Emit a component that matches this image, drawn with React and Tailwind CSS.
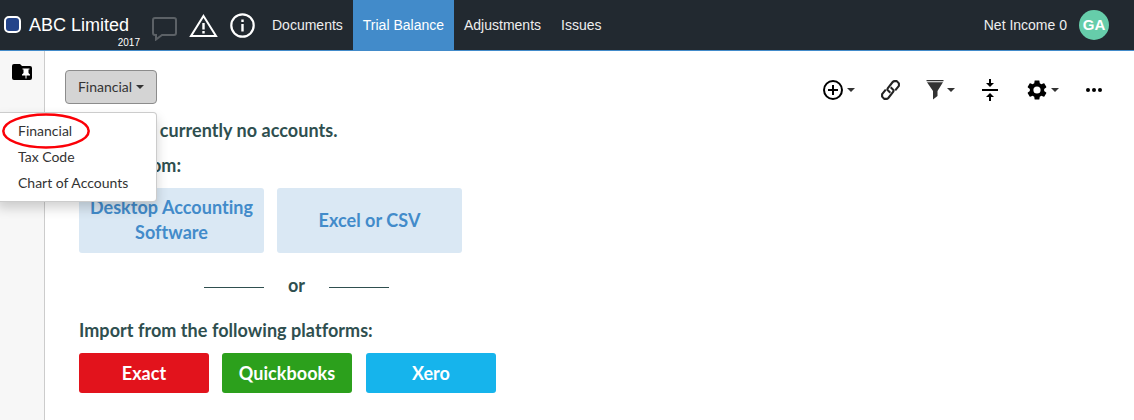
const Caret = ({ className = "" }) => (
  <span className={`block h-0 w-0 border-x-4 border-t-4 border-x-transparent border-t-[#333] ${className}`} />
);

const TopBar = () => (
  <header className="flex h-[51px] border-b border-[#428bca] bg-[#222930] font-['Liberation_Sans',sans-serif] text-sm text-[#eee]">
    <div className="flex w-[262px] pl-1">
      <span className="mt-4 h-[17px] w-[17px] rounded-[5px] border-2 border-white bg-[#24448a]" />
      <div className="ml-2 w-[111px] pt-[12px]">
        <div className="h-[26px] whitespace-nowrap text-[18px] leading-[26px] text-white">ABC Limited</div>
        <div className="text-right text-[10px] leading-[10px] text-white">2017</div>
      </div>
      <svg className="ml-3 mt-[17px] h-6 w-[25px]" viewBox="0 0 25 24" fill="none" stroke="#5c6166" strokeWidth="2">
        <path d="M3 1h19q2 0 2 2v13q0 2-2 2H10L4 22.500V18H3q-2 0-2-2V3q0-2 2-2Z" />
      </svg>
      <svg className="ml-3 mt-[13px] h-6 w-[29px]" viewBox="0 0 29 24" fill="none" stroke="#fff" strokeWidth="2">
        <path d="M14.500 3 27 23H2Z" />
        <path d="M14.500 10v6.500M14.500 18v2.500" strokeWidth="2.400" />
      </svg>
      <svg className="ml-3 mt-[13px] h-[25px] w-[25px]" viewBox="0 0 25 25" fill="none" stroke="#fff" strokeWidth="2.200">
        <circle cx="12.500" cy="12.500" r="11.200" />
        <path d="M12.500 6.500V9M12.500 11v7.500" strokeWidth="2.400" />
      </svg>
    </div>
    <nav className="flex h-[50px] leading-[50px]">
      <a className="px-[10px]">Documents</a>
      <a className="bg-[#428bca] px-[10px] text-white">Trial Balance</a>
      <a className="px-[10px]">Adjustments</a>
      <a className="px-[10px]">Issues</a>
    </nav>
    <div className="ml-auto flex h-[50px] items-center pr-[25px]">
      <span>Net Income 0</span>
      <span className="ml-3 flex h-[30px] w-[30px] items-center justify-center rounded-full bg-[#66cdaa] text-[15px] font-bold text-white">GA</span>
    </div>
  </header>
);

const Toolbar = () => (
  <div className="flex h-10 w-[281px] items-center">
    <svg className="h-5 w-5" viewBox="0 0 20 20" fill="none" stroke="#000" strokeWidth="2">
      <circle cx="10" cy="10" r="9" />
      <path d="M10 5v10M5 10h10" />
    </svg>
    <Caret className="ml-1" />
    <svg className="ml-[26px] h-5 w-[19px]" viewBox="0 0 19 20" fill="none" stroke="#222" strokeWidth="2.100" strokeLinejoin="round">
      <path d="M9.300 12.700 6.800 10.300Q5.900 9.300 6.700 8.300L11.700 2Q12.500 1.100 13.600 1.100H15.800L17.900 3.400V5.800L14.200 10.400" />
      <path d="M9.700 7.300 12.200 9.700Q13.100 10.700 12.300 11.700L7.300 18Q6.500 18.900 5.400 18.900H3.200L1.100 16.600V14.200L4.800 9.600" />
    </svg>
    <svg className="ml-[26px] h-5 w-[18px]" viewBox="0 0 18 20" fill="#333">
      <path d="M.5 0h17v1.200H.5ZM1 2.200h16L11.500 11v5L7 19.500V11Z" />
    </svg>
    <Caret className="ml-[3px]" />
    <svg className="ml-[27px] h-[22px] w-4" viewBox="0 0 16 22" fill="#000">
      <path d="M0 10h16v2H0ZM7 0h2v4h3L8 8 4 4h3ZM7 22h2v-4h3l-4-4-4 4h3Z" />
    </svg>
    <svg className="ml-[29px] h-5 w-5" viewBox="2.200 2 19.600 20" fill="#000">
      <path d="M19.140 12.940c.04-.3.060-.61.060-.94s-.02-.64-.07-.94l2.030-1.580c.18-.14.230-.41.120-.61l-1.920-3.320c-.12-.22-.37-.29-.59-.22l-2.390.96c-.5-.38-1.030-.7-1.620-.94L14.400 2.810c-.04-.24-.24-.41-.48-.41h-3.840c-.24 0-.43.170-.47.410L9.250 5.350c-.59.240-1.130.57-1.620.94l-2.390-.96c-.22-.08-.47 0-.59.220L2.740 8.870c-.12.210-.08.470.120.610l2.030 1.580c-.05.300-.09.630-.09.940s.02.640.070.940l-2.030 1.580c-.18.140-.23.410-.12.610l1.920 3.320c.12.220.37.290.59.220l2.390-.96c.5.380 1.030.70 1.620.94l.36 2.540c.05.240.24.410.48.410h3.840c.24 0 .44-.17.47-.41l.36-2.540c.59-.24 1.130-.56 1.620-.94l2.390.96c.22.080.47 0 .59-.22l1.920-3.320c.12-.22.070-.47-.12-.61ZM12 15.600a3.600 3.600 0 1 1 0-7.200 3.600 3.600 0 0 1 0 7.200Z" />
    </svg>
    <Caret className="ml-1" />
    <svg className="ml-[27px] h-1 w-4" viewBox="0 0 16 4" fill="#000">
      <circle cx="2" cy="2" r="2" /><circle cx="8" cy="2" r="2" /><circle cx="14" cy="2" r="2" />
    </svg>
  </div>
);

const ViewMenu = () => (
  <ul className="absolute -left-[68px] top-[42px] z-10 h-[90px] w-[160px] rounded border border-black/20 bg-white py-[5px] pl-5 text-sm leading-[26px] text-[#333] shadow-[0_6px_12px_rgba(0,0,0,0.18)]">
    <li>Financial</li>
    <li>Tax Code</li>
    <li>Chart of Accounts</li>
    <svg className="absolute left-1 top-0 h-9 w-[90px]" viewBox="0 0 90 36" fill="none" stroke="#fb0007" strokeWidth="2.500">
      <ellipse cx="44" cy="18" rx="42.700" ry="16.500" />
    </svg>
  </ul>
);

export default function App() {
  return (
    <div className="flex h-[420px] w-[1134px] flex-col overflow-hidden bg-white font-[Lato,sans-serif]">
      <TopBar />
      <div className="flex flex-1">
        <aside className="w-[45px] border-r border-[#ccc] bg-[#f7f7f7] pl-3 pt-[13px]">
          <svg className="h-4 w-5" viewBox="0 0 20 16">
            <path d="M2 0h6l2 2h8q2 0 2 2v10q0 2-2 2H2q-2 0-2-2V2Q0 0 2 0Z" fill="#000" />
            <path d="M10.500 4.500h7v1h-1v3.500l1.500 1.500v1h-3.500v3h-1v-3H10v-1l1.500-1.500V5.500h-1Z" fill="#fff" />
          </svg>
        </aside>
        <main className="flex-1">
          <div className="flex h-[69px] justify-between pl-5 pt-[19px]">
            <div className="relative h-[34px]">
              <button className="flex h-[34px] w-[92px] items-center justify-center gap-1 rounded border border-[#8c8c8c] bg-[#d4d4d4] text-sm text-[#333]">
                Financial <Caret />
              </button>
              <ViewMenu />
            </div>
            <div className="pr-[30px]"><Toolbar /></div>
          </div>
          <section className="pl-[34px] text-[18px] font-bold leading-[25px] tracking-[0.045px] text-[#2f4f4f] [font-variant-ligatures:none]">
            <p className="-mt-[2px] whitespace-nowrap">There are currently no accounts.</p>
            <p className="mt-[10px]">Import from:</p>
            <div className="mt-[10px] flex gap-[13px] text-center text-[#428bca]">
              <button className="h-[65px] w-[185px] rounded-[3px] bg-[#dae8f4] pb-[2px]">Desktop Accounting Software</button>
              <button className="h-[65px] w-[185px] rounded-[3px] bg-[#dae8f4]">Excel or CSV</button>
            </div>
            <div className="ml-[125px] mt-5 flex h-[25px] w-[185px] items-center justify-between">
              <span className="mt-[3px] h-px w-[60px] bg-[#2f4f4f]" />
              <span>or</span>
              <span className="mt-[3px] h-px w-[60px] bg-[#2f4f4f]" />
            </div>
            <p className="mt-5">Import from the following platforms:</p>
            <div className="mt-[10px] flex gap-[13px] text-white">
              <button className="h-10 w-[130px] rounded-[3px] bg-[#e2131c]">Exact</button>
              <button className="h-10 w-[130px] rounded-[3px] bg-[#2ca01c]">Quickbooks</button>
              <button className="ml-px h-10 w-[130px] rounded-[3px] bg-[#16b4ec]">Xero</button>
            </div>
          </section>
        </main>
      </div>
    </div>
  );
}
